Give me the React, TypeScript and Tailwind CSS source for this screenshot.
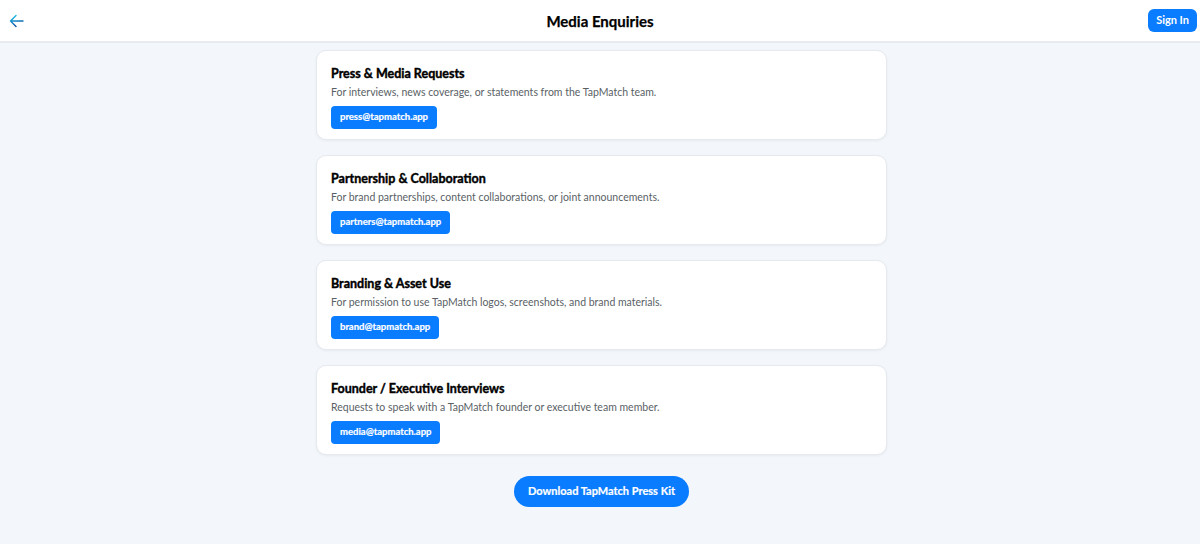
import React from "react";

const cards = [
  { t: "Press & Media Requests", d: "For interviews, news coverage, or statements from the TapMatch team.", e: "press@tapmatch.app" },
  { t: "Partnership & Collaboration", d: "For brand partnerships, content collaborations, or joint announcements.", e: "partners@tapmatch.app" },
  { t: "Branding & Asset Use", d: "For permission to use TapMatch logos, screenshots, and brand materials.", e: "brand@tapmatch.app" },
  { t: "Founder / Executive Interviews", d: "Requests to speak with a TapMatch founder or executive team member.", e: "media@tapmatch.app" },
];

export default function App() {
  return (
    <div className="min-h-[544px] bg-[#f3f6fa]" style={{ fontFamily: 'Lato, "Noto Sans", sans-serif' }}>
      <header className="h-[43px] bg-white border-b-2 border-[#e8ebef] flex items-center justify-between px-[8px] relative">
        <button className="w-[16px] h-[16px] flex items-center justify-center">
          <svg width="15" height="14" viewBox="0 0 15 14" fill="none">
            <defs>
              <linearGradient id="g" x1="0" y1="0" x2="0.4" y2="1">
                <stop offset="0" stopColor="#1ec8f0" />
                <stop offset="1" stopColor="#0a4fa0" />
              </linearGradient>
            </defs>
            <path d="M14 7H1.5M7 1.5L1.5 7L7 12.5" stroke="url(#g)" strokeWidth="1.4" strokeLinecap="round" strokeLinejoin="round" />
          </svg>
        </button>
        <h1 className="absolute left-1/2 -translate-x-1/2 top-[11px] text-[15px] leading-[20px] font-bold text-black [-webkit-text-stroke:0.25px_black]">Media Enquiries</h1>
        <button className="h-[23px] px-[8px] rounded-[6px] bg-[#0a7cff] text-white text-[11px] font-bold mr-[-5px]">Sign In</button>
      </header>
      <main className="flex flex-col items-center pt-[7px] pl-[3px]">
        <div className="w-[571px] flex flex-col gap-[15px]">
          {cards.map((c) => (
            <div key={c.e} className="bg-white rounded-[10px] border border-[#e6e9ee] shadow-[0_1px_3px_rgba(0,0,0,0.05)] h-[90px] px-[14px] pt-[14px]">
              <div className="text-[12.5px] font-bold text-black leading-[18px] [-webkit-text-stroke:0.4px_black]">{c.t}</div>
              <div className="text-[10.5px] text-[#5a5f66] leading-[14px] mt-[2px]">{c.d}</div>
              <button className="mt-[7px] h-[23px] px-[9px] rounded-[4px] bg-[#0a7cff] text-white text-[9.5px] font-bold [-webkit-text-stroke:0.2px_white]">{c.e}</button>
            </div>
          ))}
        </div>
        <button className="mt-[21px] h-[31px] w-[175px] rounded-full bg-[#0a7cff] text-white text-[11px] font-bold whitespace-nowrap [-webkit-text-stroke:0.2px_white]">Download TapMatch Press Kit</button>
      </main>
    </div>
  );
}
